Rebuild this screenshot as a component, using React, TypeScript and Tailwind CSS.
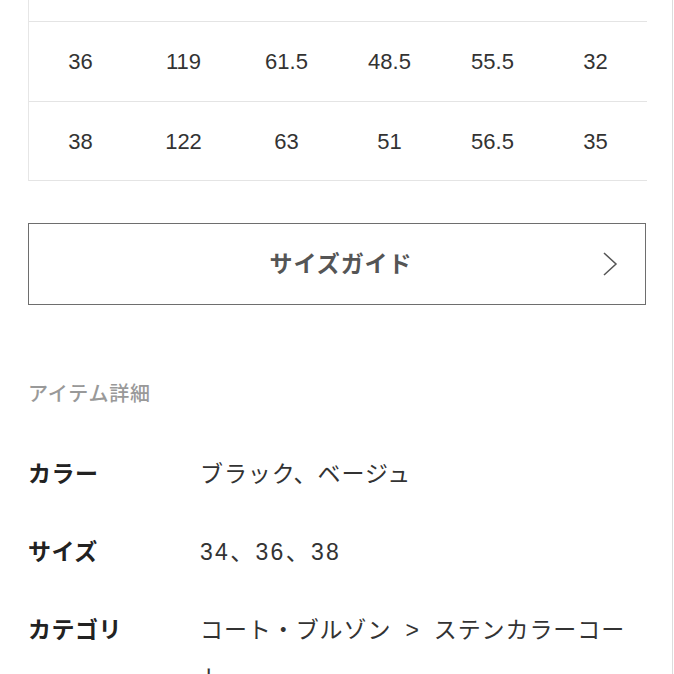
import React from "react";

const rows = [
  ["36", "119", "61.5", "48.5", "55.5", "32"],
  ["38", "122", "63", "51", "56.5", "35"],
];

export default function App() {
  return (
    <div
      className="w-[674px] h-[674px] overflow-hidden bg-white flex"
      style={{ fontFamily: '"Liberation Sans", "Noto Sans CJK JP", sans-serif' }}
    >
      <div className="w-[672px] shrink-0 pl-[28px] pr-[26px]">
        {/* table */}
        <div className="w-[619px] border-l border-[#e6e6e6]">
          <div className="h-[21px]" />
          {rows.map((r, i) => (
            <div
              key={i}
              className={`h-[80px] grid grid-cols-6 items-center border-t border-[#e4e4e4] ${
                i === rows.length - 1 ? "border-b" : ""
              }`}
            >
              {r.map((c, j) => (
                <div key={j} className="text-center text-[22px] text-[#333]">
                  {c}
                </div>
              ))}
            </div>
          ))}
        </div>

        {/* size guide button */}
        <div className="mt-[42px] w-[618px] h-[82px] border-[1.5px] border-[#6e6e6e] flex items-center justify-center relative">
          <span className="pl-[8px] text-[23px] font-bold text-[#555] tracking-[0.04em]">サイズガイド</span>
          <svg
            className="absolute right-[27px] top-1/2 -translate-y-1/2"
            width="16"
            height="26"
            viewBox="0 0 16 26"
            fill="none"
          >
            <path d="M2 2 L14 13 L2 24" stroke="#555" strokeWidth="1.5" />
          </svg>
        </div>

        {/* item details */}
        <div className="mt-[74px] h-[30px] flex items-center text-[20px] font-medium text-[#999] tracking-[0.04em]">
          アイテム詳細
        </div>
        <div className="mt-[41px] flex flex-col gap-[30px]">
          <div className="flex items-start">
            <div className="w-[172px] shrink-0 text-[23px] leading-[48px] font-bold text-[#222] tracking-[0.02em]">
              カラー
            </div>
            <div className="w-[440px] text-[23px] leading-[48px] text-[#333] tracking-[0.04em]">
              ブラック、ベージュ
            </div>
          </div>
          <div className="flex items-start">
            <div className="w-[172px] shrink-0 text-[23px] leading-[48px] font-bold text-[#222] tracking-[0.02em]">
              サイズ
            </div>
            <div className="w-[440px] text-[23px] leading-[48px] text-[#333] tracking-[0.1em]">
              34、36、38
            </div>
          </div>
          <div className="flex items-start">
            <div className="w-[172px] shrink-0 text-[23px] leading-[48px] font-bold text-[#222] tracking-[0.02em]">
              カテゴリ
            </div>
            <div className="w-[440px] text-[23px] leading-[48px] text-[#333] tracking-[0.04em]">
              コート・ブルゾン<span className="mx-[14px]">&gt;</span>ステンカラーコート
            </div>
          </div>
        </div>
      </div>
      <div className="w-px h-full bg-[#dcdcdc]" />
    </div>
  );
}
